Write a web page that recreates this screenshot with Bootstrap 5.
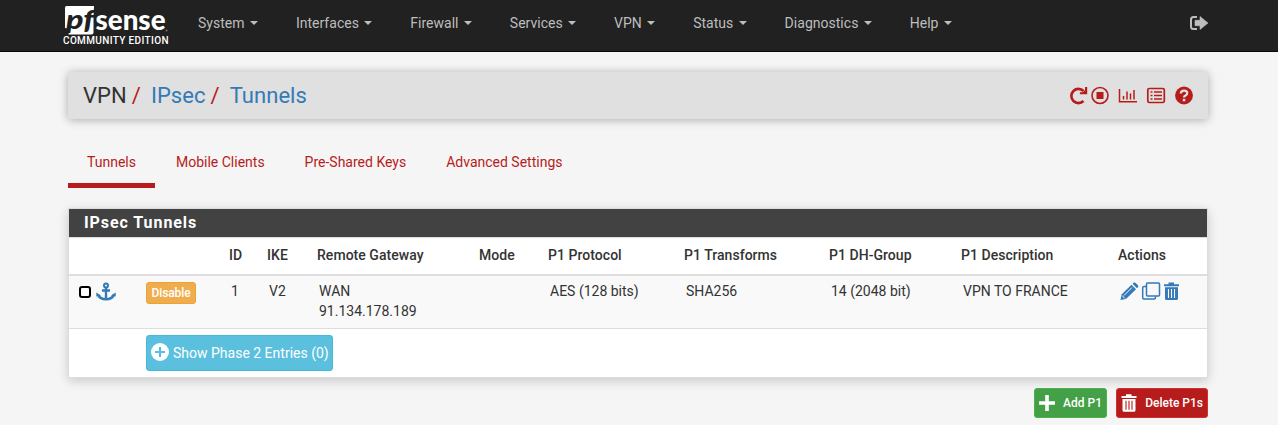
<!DOCTYPE html>
<html lang="en">
<head>
<meta charset="utf-8">
<title>VPN: IPsec: Tunnels</title>
<link href="https://cdn.jsdelivr.net/npm/bootstrap@5.3.0/dist/css/bootstrap.min.css" rel="stylesheet">
<style>
body{font-family:Roboto,"Liberation Sans",sans-serif;font-size:14px;line-height:20px;color:#333;background:#f5f5f5;letter-spacing:0}
a{text-decoration:none;color:#337ab7}
svg{display:block;flex:none}
.wrap{width:1140px;margin-left:68px}
.topbar{height:52px;background:#212121;border-bottom:1px solid #0a0a0a}
.brand-box{width:120px;margin-left:-8px}
.topbar .nav{margin-left:-1px}
.topbar .nav-link{color:#bdbdbd;padding:0 19px;display:flex;align-items:center;height:46px;font-size:14px;letter-spacing:.02px}
.topbar .dropdown-toggle::after{margin-left:5.300px;border-top-width:4px;border-right-width:4px;border-left-width:4px;vertical-align:0}
.logout{padding-top:16px}
.crumbs{height:47px;margin-top:20px;padding:0 15px;background:#e0e0e0;border-radius:2px;box-shadow:0 1px 10px rgba(0,0,0,.3);font-size:22px;letter-spacing:.05px}
.crumbs a{margin-left:10px}
.slash{color:#b71c1c;margin-left:5px}
.tabs-row{margin-top:23px;height:46px;gap:2px}
.tabs-row .nav-link{color:#b71c1c;padding:10px 19px 0;height:46px;border-bottom:5px solid transparent}
.tabs-row .nav-link.active{border-color:#b71c1c}
.panel-box{margin-top:20px;background:#fff;border:1px solid #ddd;box-shadow:0 3px 10px rgba(0,0,0,.18)}
.panel-title{height:28px;line-height:27px;padding-left:15px;background:#424242;color:#fff;font-size:16px;font-weight:700;letter-spacing:.93px}
.tunnels{table-layout:fixed;width:1138px;margin:0;border-top:1px solid #ddd;color:#333;border-collapse:separate;border-spacing:0}
.tunnels th{height:38px;padding:7px 5px 9px;border-bottom:2px solid #ddd;font-weight:500;letter-spacing:.04px;white-space:nowrap;vertical-align:middle;line-height:20px}
.tunnels td{padding:5px 7px;vertical-align:top;white-space:nowrap;height:53px;border-bottom:1px solid #ddd;background:#f9f9f9}
.tunnels tr.last-row td{background:#fff;border:0;height:48px}
.tunnels td.tight{padding:6px 5px}
.check-box{width:12px;height:12px;border:2px solid #000;border-radius:3px;background:#fff}
.btn{letter-spacing:0;border-radius:3px;color:#fff;display:inline-flex;align-items:center;padding:0 4px}
.btn-dis{background:#f0ad4e;border-color:#eea236;font-size:12px;height:22px;width:50px;justify-content:center;font-weight:500;letter-spacing:-.1px}
.btn-show{background:#5bc0de;border-color:#46b8da;font-size:14px;height:36px;width:187px}
.btn-show svg{margin-top:-3px}
.btn-add{background:#43a047;border-color:#4caf50;font-size:12px;height:30px;width:73px;font-weight:500}
.btn-del{background:#b71c1c;border-color:#d32f2f;font-size:12px;height:30px;width:92px;font-weight:500}
</style>
</head>
<body>
<nav class="topbar">
 <div class="wrap d-flex">
  <a class="brand-box" href="#">
   <svg width="112" height="51" viewBox="60 0 112 51">
    <path d="M66.500 6H94L93.500 17V32.500Q93.500 34.500 91.500 34.500H68.500L69.500 29L65 28V8Q65 6 66.500 6Z" fill="#fff"/>
    <text x="66" y="29" font-family="Lato" font-style="italic" font-weight="900" font-size="27" fill="#212121" textLength="28" lengthAdjust="spacingAndGlyphs">pf</text>
    <text x="95.500" y="29.500" font-family="Lato" font-weight="900" font-size="28" fill="#fff" textLength="70" lengthAdjust="spacingAndGlyphs">sense</text>
    <circle cx="166.500" cy="30.500" r="1" fill="#777"/>
    <text x="63" y="44" font-family="Roboto" font-weight="500" font-size="10" fill="#fff" textLength="105.500">COMMUNITY EDITION</text>
   </svg>
  </a>
  <div class="nav">
   <a class="nav-link dropdown-toggle" href="#">System</a><a class="nav-link dropdown-toggle" href="#">Interfaces</a><a class="nav-link dropdown-toggle" href="#">Firewall</a><a class="nav-link dropdown-toggle" href="#">Services</a><a class="nav-link dropdown-toggle" href="#">VPN</a><a class="nav-link dropdown-toggle" href="#">Status</a><a class="nav-link dropdown-toggle" href="#">Diagnostics</a><a class="nav-link dropdown-toggle" href="#">Help</a>
  </div>
  <a class="logout ms-auto" href="#"><svg width="18" height="14" viewBox="0 0 18 14"><path d="M7 1H3.500Q1 1 1 3.500V10.500Q1 13 3.500 13H7" fill="none" stroke="#bdbdbd" stroke-width="2"/><path d="M5 4.300H10V.5L18 7L10 13.500V9.700H5Z" fill="#bdbdbd" stroke="#bdbdbd" stroke-width=".6"/></svg></a>
 </div>
</nav>
<main class="wrap">
 <header class="crumbs d-flex align-items-center">
  <div class="crumb-path"><span>VPN</span><span class="slash">/</span><a href="#">IPsec</a><span class="slash">/</span><a href="#">Tunnels</a></div>
  <svg class="ms-auto" width="125" height="19" viewBox="1068 86.500 125 19" fill="none" stroke="#b71c1c">
   <path d="M1083.500 91.500A7.100 7.100 0 1 0 1083.500 101.500" stroke-width="2.600"/><path d="M1087.200 87.500V94.800H1079.900V92.800H1082.800L1085 90.500V87.500Z" fill="#b71c1c" stroke="none"/>
   <circle cx="1100" cy="96" r="8" stroke-width="1.600"/><path d="M1096.500 92.500h7v7h-7z" fill="#b71c1c" stroke="none"/>
   <path d="M1119.500 89.500V102.300H1137M1123.500 100V96.500M1127 100V92M1130.500 100V94M1134 100V90.500" stroke-width="1.500"/>
   <rect x="1147.800" y="89" width="16.500" height="14" rx="1.500" stroke-width="1.700"/><path d="M1150.500 92.500h2M1150.500 96h2M1150.500 99.500h2M1154 92.500h8M1154 96h8M1154 99.500h8" stroke-width="1.600"/>
   <circle cx="1184" cy="96" r="8.900" fill="#b71c1c" stroke="none"/><path d="M1180.800 94Q1181 91.200 1184 91.200Q1187.200 91.200 1187.200 93.700Q1187.200 95 1185.500 96Q1184 96.800 1184 98" stroke="#e0e0e0" stroke-width="2.300"/><path d="M1182.800 99.300h2.500v2.500h-2.500z" fill="#e0e0e0" stroke="none"/>
  </svg>
 </header>
 <div class="nav tabs-row"><a class="nav-link active" href="#">Tunnels</a><a class="nav-link" href="#">Mobile Clients</a><a class="nav-link" href="#">Pre-Shared Keys</a><a class="nav-link" href="#">Advanced Settings</a></div>
 <section class="panel-box">
  <h2 class="panel-title m-0">IPsec Tunnels</h2>
  <table class="tunnels">
   <colgroup><col style="width:72px"><col style="width:83px"><col style="width:38px"><col style="width:50px"><col style="width:162px"><col style="width:69px"><col style="width:136px"><col style="width:145px"><col style="width:132px"><col style="width:157px"><col style="width:94px"></colgroup>
   <thead><tr><th></th><th></th><th>ID</th><th>IKE</th><th>Remote Gateway</th><th>Mode</th><th>P1 Protocol</th><th>P1 Transforms</th><th>P1 DH-Group</th><th>P1 Description</th><th>Actions</th></tr></thead>
   <tbody>
    <tr>
     <td style="padding:6px 0 0 10px"><div class="d-flex align-items-center"><span class="check-box"></span>
      <svg width="20" height="20" viewBox="0 0 20 20" style="margin-left:5px" fill="none" stroke="#337ab7"><circle cx="10" cy="3.600" r="2" stroke-width="2"/><path d="M10 5.500V17M6 8.500H14" stroke-width="2.400"/><path d="M2.300 13Q4 17.300 10 17.300Q16 17.300 17.700 13" stroke-width="2.600"/><path d="M.3 14.500V10.500L5 13.500ZM19.700 14.500V10.500L15 13.500Z" fill="#337ab7" stroke="none"/></svg></div></td>
     <td class="tight"><a class="btn btn-dis" href="#">Disable</a></td>
     <td>1</td><td>V2</td><td>WAN<br>91.134.178.189</td><td></td><td>AES (128 bits)</td><td>SHA256</td><td>14 (2048 bit)</td><td>VPN TO FRANCE</td>
     <td style="padding-top:6px"><svg width="60" height="19" viewBox="1120 282 60 19" fill="#337ab7"><path d="M1120.500 300L1121.500 294.500L1131.500 284.800L1136 289.300L1126 299Z"/><path d="M1132.600 283.700L1133.700 282.600Q1134.700 282 1135.700 283L1138 285.300Q1138.700 286.300 1138 287.200L1137 288.200Z"/><path d="M1124 295.500L1132 287.500" stroke="#f9f9f9"/><path d="M1122 295.500L1125 298.500" stroke="#f9f9f9"/><g fill="none" stroke="#337ab7" stroke-width="1.500"><rect x="1146.500" y="283" width="13" height="13" rx="1"/><path d="M1146 286.500H1144Q1142.700 286.500 1142.700 288V297.500Q1142.700 299 1144 299H1154Q1155.500 299 1155.500 297.500V296.500"/></g><path d="M1164 284.300H1168.500V282.500H1174V284.300H1179V286.200H1164ZM1165 287.300H1178V298.500Q1178 300 1176.500 300H1166.500Q1165 300 1165 298.500Z"/><path d="M1168.500 289V298M1171.500 289V298M1174.500 289V298" stroke="#f9f9f9" stroke-width="1.100"/></svg></td>
    </tr>
    <tr class="last-row"><td></td><td class="tight" colspan="10"><a class="btn btn-show" href="#"><svg class="me-1" width="18" height="18" viewBox="0 0 18 18"><circle cx="9" cy="9" r="9" fill="#fff"/><path d="M9 4V14M4 9H14" stroke="#5bc0de" stroke-width="2.200"/></svg>Show Phase 2 Entries (0)</a></td></tr>
   </tbody>
  </table>
 </section>
 <div class="d-flex justify-content-end" style="margin-top:10px;gap:9px">
  <a class="btn btn-add" href="#"><svg width="16" height="16" viewBox="0 0 16 16"><path d="M8 0V16M0 8H16" stroke="#fff" stroke-width="3.600"/></svg><span class="ms-auto">Add P1</span></a>
  <a class="btn btn-del" href="#"><svg width="16" height="18" viewBox="1163.500 282.300 16 18" fill="#fff"><path d="M1164 284.300H1168.500V282.500H1174V284.300H1179V286.200H1164ZM1165 287.300H1178V298.500Q1178 300 1176.500 300H1166.500Q1165 300 1165 298.500Z"/><path d="M1168.500 289V298M1171.500 289V298M1174.500 289V298" stroke="#b71c1c" stroke-width="1.100"/></svg><span class="ms-auto">Delete P1s</span></a>
 </div>
</main>
<script src="https://cdn.jsdelivr.net/npm/bootstrap@5.3.0/dist/js/bootstrap.bundle.min.js"></script>
</body>
</html>
